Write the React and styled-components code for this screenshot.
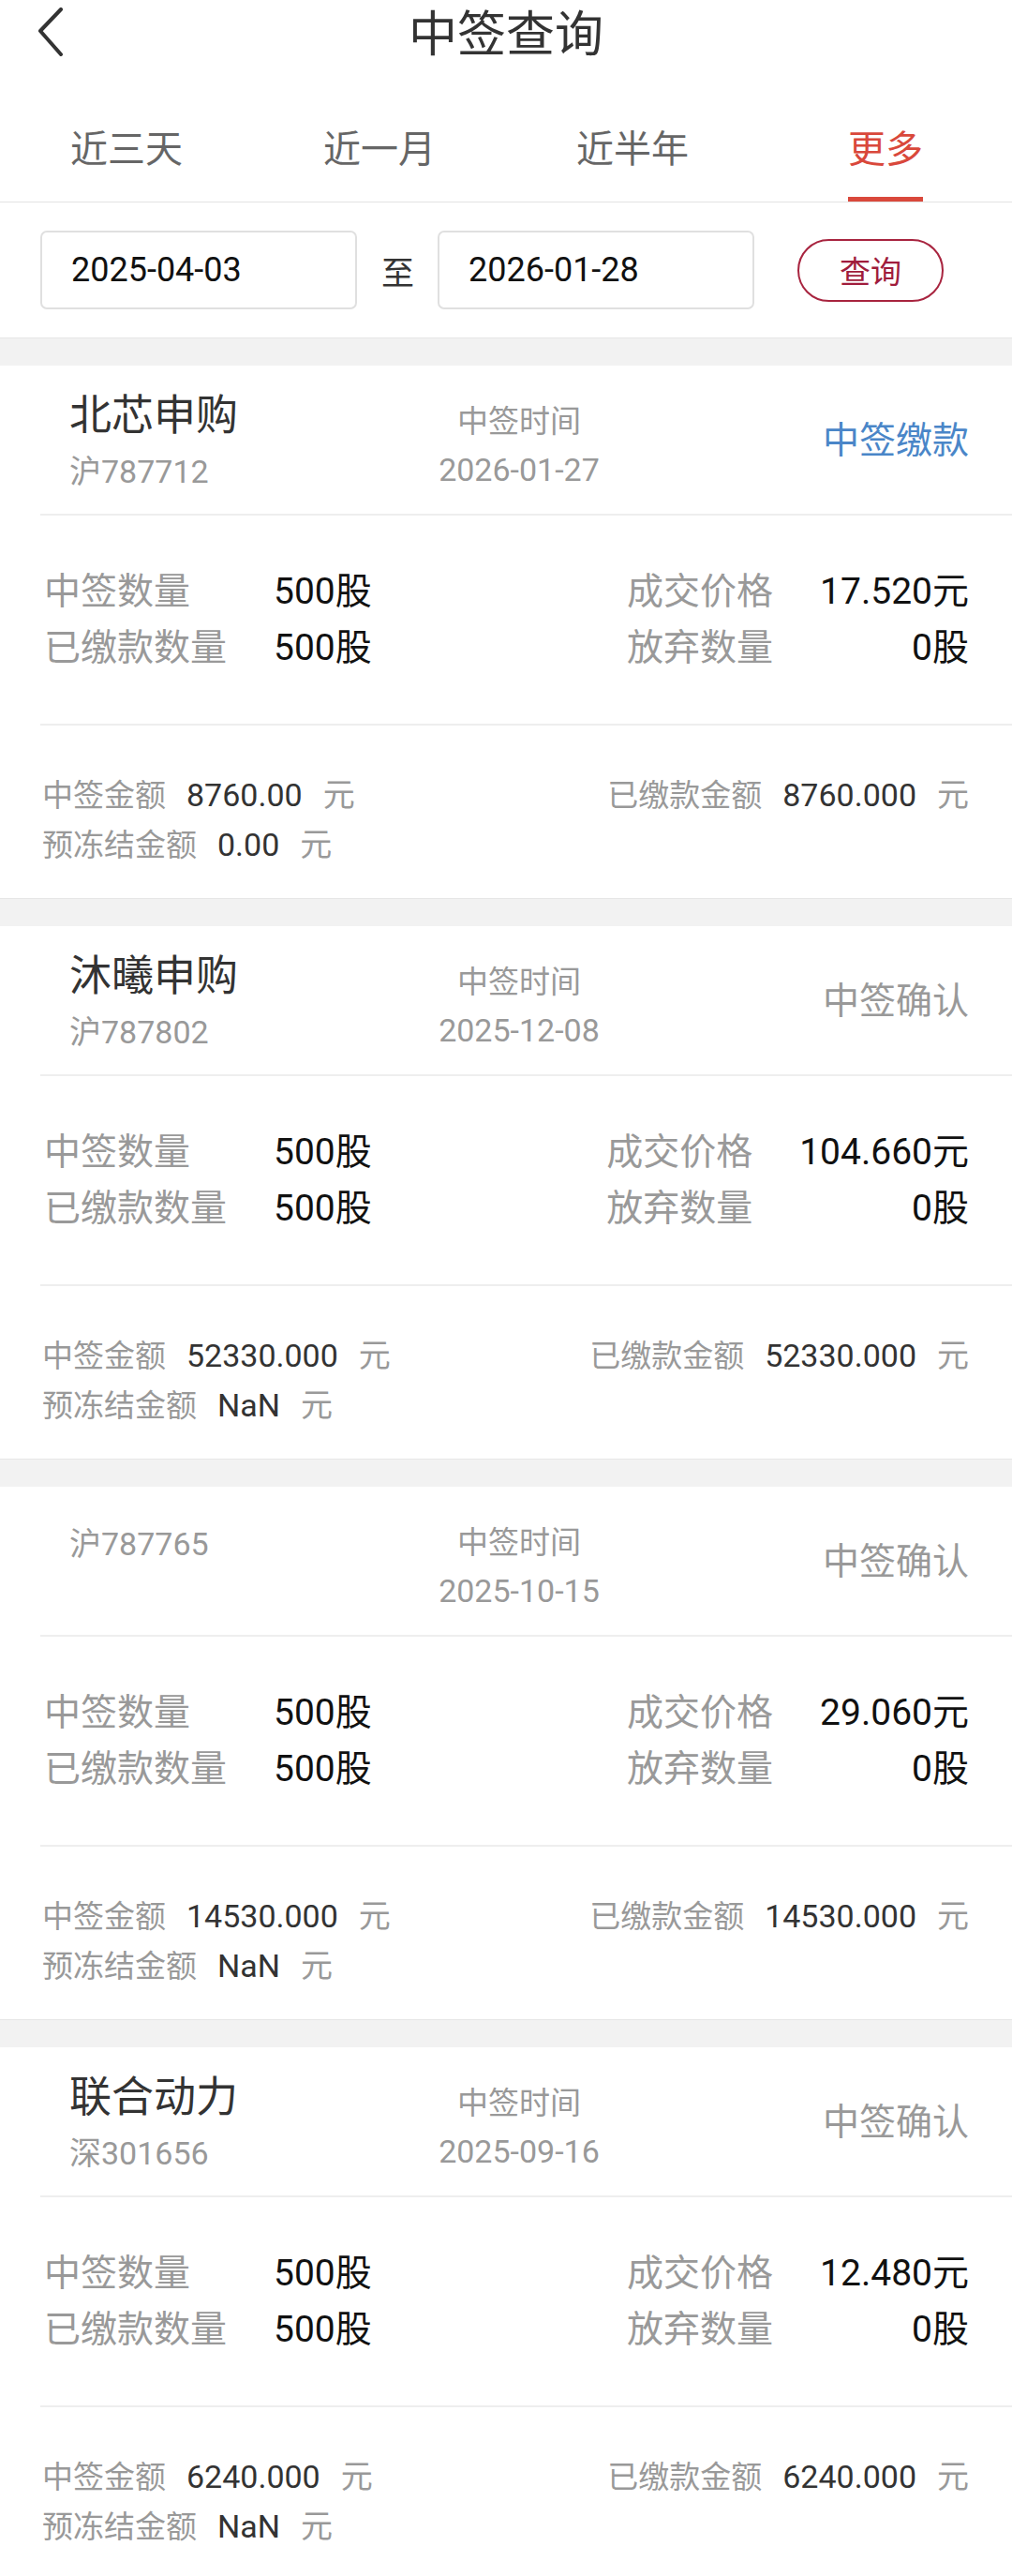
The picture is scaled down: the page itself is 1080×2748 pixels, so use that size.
import React from 'react';
import styled, { createGlobalStyle } from 'styled-components';

const GlobalStyle = createGlobalStyle`
    body {
        margin: 0;
        background: #ffffff;
        font-family: Roboto, "Noto Sans CJK SC", sans-serif;
    }
    * {
        box-sizing: border-box;
    }
`;

const Page = styled.div`
    width: 1080px;
    background: #ffffff;
`;

const TopBar = styled.div`
    display: grid;
    grid-template-columns: 1fr auto 1fr;
    height: 76px;
    align-items: center;
`;

const BackButton = styled.div`
    display: flex;
    align-self: start;
    margin: 8px 0 0 41px;
`;

const Title = styled.h1`
    margin: 0;
    font-size: 52px;
    font-weight: 400;
    line-height: 76px;
    color: #333333;
`;

const TabBar = styled.div`
    display: flex;
    border-bottom: 1px solid #e2e2e2;
`;

const Tab = styled.div`
    flex: 1;
    display: flex;
    justify-content: center;
    padding-top: 56px;
`;

const TabLabel = styled.span`
    display: inline-block;
    font-size: 40px;
    line-height: 56px;
    padding-bottom: 22px;
    color: ${p => (p.$active ? '#d9483b' : '#666666')};
    border-bottom: 5px solid ${p => (p.$active ? '#d9483b' : 'transparent')};
`;

const DateRow = styled.div`
    display: flex;
    align-items: center;
    height: 144px;
    padding-left: 43px;
`;

const DateInput = styled.div`
    width: 338px;
    height: 84px;
    display: flex;
    align-items: center;
    padding-left: 31px;
    border: 2px solid #e0e0e0;
    border-radius: 7px;
    font-size: 36px;
    color: #111111;
`;

const To = styled.span`
    margin: 0 25px 0 26px;
    font-size: 35px;
    color: #333333;
`;

const QueryButton = styled.div`
    width: 156px;
    height: 67px;
    margin-left: 46px;
    display: flex;
    align-items: center;
    justify-content: center;
    border: 2px solid #a8243f;
    border-radius: 34px;
    font-size: 33px;
    color: #a01c3c;
`;

const Gap = styled.div`
    height: 30px;
    background: #f2f2f2;
    border-top: 1px solid #e6e6e6;
`;

const Card = styled.div`
    height: 568px;
    padding-left: 43px;
    background: #ffffff;
`;

const CardHead = styled.div`
    display: grid;
    grid-template-columns: 1fr 1fr 1fr;
    height: 160px;
    padding: 0 46px 0 31px;
    border-bottom: 2px solid #eeeeee;
`;

const Col = styled.div`
    display: flex;
    flex-direction: column;
    align-items: ${p => p.$align || 'flex-start'};
`;

const StockName = styled.div`
    margin-top: 26px;
    font-size: 45px;
    line-height: 56px;
    color: #333333;
`;

const StockCode = styled.div`
    margin-top: ${p => (p.$solo ? '38px' : '8px')};
    font-size: 34px;
    line-height: 46px;
    color: #999999;
`;

const TimeLabel = styled.div`
    margin-top: 38px;
    font-size: 33px;
    line-height: 44px;
    color: #999999;
`;

const TimeValue = styled.div`
    margin-top: 6px;
    font-size: 34px;
    line-height: 46px;
    color: #999999;
`;

const Status = styled.div`
    margin-top: 55px;
    font-size: 39px;
    line-height: 50px;
    color: ${p => (p.$pay ? '#4a86c8' : '#999999')};
`;

const Stats = styled.div`
    display: flex;
    justify-content: space-between;
    padding: 51px 46px 51px 4px;
    border-bottom: 2px solid #eeeeee;
`;

const StatGrid = styled.div`
    display: grid;
    grid-template-columns: auto auto;
    column-gap: 50px;
    font-size: 39px;
    line-height: 60px;
`;

const StatLabel = styled.span`
    color: #999999;
`;

const StatValue = styled.span`
    color: #111111;
    text-align: ${p => (p.$right ? 'right' : 'left')};
`;

const Amounts = styled.div`
    display: grid;
    grid-template-columns: 1fr auto;
    padding: 48px 46px 0 2px;
    font-size: 33px;
    line-height: 52px;
`;

const AmountItem = styled.div`
    display: flex;
    align-items: baseline;
    justify-self: ${p => (p.$right ? 'end' : 'start')};
`;

const AmountLabel = styled.span`
    color: #999999;
`;

const AmountValue = styled.span`
    margin: 0 22px;
    font-size: 34px;
    color: #333333;
`;

const AmountUnit = styled.span`
    font-size: 34px;
    color: #999999;
`;

const tabs = ['近三天', '近一月', '近半年', '更多'];

const records = [
    { name: '北芯申购', code: '沪787712', date: '2026-01-27', status: '中签缴款', pay: true,
      price: '17.520', amount: '8760.00', paid: '8760.000', frozen: '0.00' },
    { name: '沐曦申购', code: '沪787802', date: '2025-12-08', status: '中签确认',
      price: '104.660', amount: '52330.000', paid: '52330.000', frozen: 'NaN' },
    { name: '', code: '沪787765', date: '2025-10-15', status: '中签确认',
      price: '29.060', amount: '14530.000', paid: '14530.000', frozen: 'NaN' },
    { name: '联合动力', code: '深301656', date: '2025-09-16', status: '中签确认',
      price: '12.480', amount: '6240.000', paid: '6240.000', frozen: 'NaN' }
];

const Amount = ({ label, value, right }) => (
    <AmountItem $right={right}>
        <AmountLabel>{label}</AmountLabel>
        <AmountValue>{value}</AmountValue>
        <AmountUnit>元</AmountUnit>
    </AmountItem>
);

const RecordCard = ({ rec }) => (
    <Card>
        <CardHead>
            <Col>
                {rec.name && <StockName>{rec.name}</StockName>}
                <StockCode $solo={!rec.name}>{rec.code}</StockCode>
            </Col>
            <Col $align="center">
                <TimeLabel>中签时间</TimeLabel>
                <TimeValue>{rec.date}</TimeValue>
            </Col>
            <Col $align="flex-end">
                <Status $pay={rec.pay}>{rec.status}</Status>
            </Col>
        </CardHead>
        <Stats>
            <StatGrid>
                <StatLabel>中签数量</StatLabel>
                <StatValue>500股</StatValue>
                <StatLabel>已缴款数量</StatLabel>
                <StatValue>500股</StatValue>
            </StatGrid>
            <StatGrid>
                <StatLabel>成交价格</StatLabel>
                <StatValue $right>{rec.price}元</StatValue>
                <StatLabel>放弃数量</StatLabel>
                <StatValue $right>0股</StatValue>
            </StatGrid>
        </Stats>
        <Amounts>
            <Amount label="中签金额" value={rec.amount} />
            <Amount label="已缴款金额" value={rec.paid} right />
            <Amount label="预冻结金额" value={rec.frozen} />
        </Amounts>
    </Card>
);

const App = () => {
    return <Page>
        <GlobalStyle />
        <TopBar>
            <BackButton>
                <svg width="28" height="52" viewBox="0 0 28 52">
                    <polyline points="24,2 2,25 24,50" fill="none" stroke="#333333"
                        strokeWidth="4" strokeLinecap="round" strokeLinejoin="round" />
                </svg>
            </BackButton>
            <Title>中签查询</Title>
            <div />
        </TopBar>
        <TabBar>
            {tabs.map((t, i) => (
                <Tab key={t}>
                    <TabLabel $active={i === tabs.length - 1}>{t}</TabLabel>
                </Tab>
            ))}
        </TabBar>
        <DateRow>
            <DateInput>2025-04-03</DateInput>
            <To>至</To>
            <DateInput>2026-01-28</DateInput>
            <QueryButton>查询</QueryButton>
        </DateRow>
        {records.map(rec => (
            <React.Fragment key={rec.code}>
                <Gap />
                <RecordCard rec={rec} />
            </React.Fragment>
        ))}
    </Page>;
};

export default App;
